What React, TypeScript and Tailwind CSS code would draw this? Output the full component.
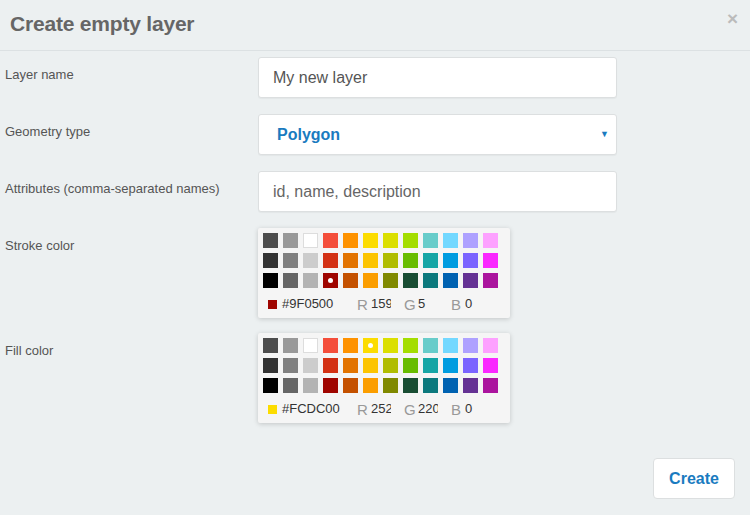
// Create empty layer dialog with two compact colour pickers

const SWATCHES = [
  '#4D4D4D', '#999999', '#FFFFFF', '#F44E3B', '#FE9200', '#FCDC00', '#DBDF00', '#A4DD00', '#68CCCA', '#73D8FF', '#AEA1FF', '#FDA1FF',
  '#333333', '#808080', '#CCCCCC', '#D33115', '#E27300', '#FCC400', '#B0BC00', '#68BC00', '#16A5A5', '#009CE0', '#7B64FF', '#FA28FF',
  '#000000', '#666666', '#B3B3B3', '#9F0500', '#C45100', '#FB9E00', '#808900', '#194D33', '#0C797D', '#0062B1', '#653294', '#AB149E',
];

interface PickerProps {
  hex: string;
  rgb: [number, number, number];
}

function CompactPicker({ hex, rgb }: PickerProps) {
  return (
    <div className="w-[252px] h-[90px] rounded-[2px] bg-[#f5f5f5] pt-[5px] pl-[5px] shadow-[0_1px_5px_rgba(0,0,0,0.18)]">
      <div className="flex flex-wrap w-[240px] gap-[5px]">
        {SWATCHES.map((c, i) => (
          <div
            key={i}
            className={`w-[15px] h-[15px] flex items-center justify-center ${c === '#FFFFFF' ? 'shadow-[inset_0_0_0_1px_#ddd]' : ''}`}
            style={{ backgroundColor: c }}
          >
            {c === hex && <div className="w-[5px] h-[5px] rounded-full bg-white" />}
          </div>
        ))}
      </div>
      {/* hex + rgb fields */}
      <div className="flex items-center h-[16px] mt-[8px] text-[13px] text-[#333]">
        <div className="w-[9px] h-[9px] ml-[5px]" style={{ backgroundColor: hex }} />
        <span className="ml-[5px] w-[75px]">{hex}</span>
        <div className="flex items-center w-[47px]">
          <span className="text-[#999] text-[15px] w-[14px] mt-[2px]">R</span>
          <span className="w-[20px] overflow-hidden whitespace-nowrap">{rgb[0]}</span>
        </div>
        <div className="flex items-center w-[47px]">
          <span className="text-[#999] text-[15px] w-[14px] mt-[2px]">G</span>
          <span className="w-[20px] overflow-hidden whitespace-nowrap">{rgb[1]}</span>
        </div>
        <div className="flex items-center w-[40px]">
          <span className="text-[#999] text-[15px] w-[14px] mt-[2px]">B</span>
          <span className="w-[20px] overflow-hidden whitespace-nowrap">{rgb[2]}</span>
        </div>
      </div>
    </div>
  );
}

function Row({ label, children }: { label: string; children: React.ReactNode }) {
  return (
    <div className="flex">
      <label className="w-[258px] shrink-0 pl-[5px] pt-[10px] text-[13px] leading-[16px] text-[#555]">{label}</label>
      {children}
    </div>
  );
}

const inputCls =
  'w-[359px] h-[41px] rounded-[3px] border border-[#dcdfe0] bg-white shadow-[0_1px_1px_rgba(0,0,0,0.04)] flex items-center';

export default function App() {
  return (
    <div className="w-[750px] h-[515px] bg-[#ecf0f1] font-['Liberation_Sans',Arial,sans-serif] flex flex-col">
      {/* Header */}
      <div className="h-[51px] flex items-center justify-between border-b border-[#dce1e3] pl-[10px] pr-[12px] shrink-0">
        <h1 className="text-[21px] font-bold text-[#666] mt-[-2px] tracking-[-0.2px]">Create empty layer</h1>
        <span className="text-[19px] font-bold text-[#bbb] leading-none mt-[-13px]">×</span>
      </div>

      {/* Form */}
      <div className="flex flex-col gap-[16px] pt-[6px]">
        <Row label="Layer name">
          <div className={inputCls}>
            <span className="pl-[14px] text-[16px] text-[#555]">My new layer</span>
          </div>
        </Row>
        <Row label="Geometry type">
          <div className={`${inputCls} justify-between`}>
            <span className="pl-[18px] text-[16px] font-bold text-[#1a7bbf]">Polygon</span>
            <span className="pr-[7px] text-[9px] text-[#1a7bbf]">▼</span>
          </div>
        </Row>
        <Row label="Attributes (comma-separated names)">
          <div className={inputCls}>
            <span className="pl-[14px] text-[16px] text-[#666]">id, name, description</span>
          </div>
        </Row>
        <Row label="Stroke color">
          <CompactPicker hex="#9F0500" rgb={[159, 5, 0]} />
        </Row>
        <div className="mt-[-1px]">
          <Row label="Fill color">
            <CompactPicker hex="#FCDC00" rgb={[252, 220, 0]} />
          </Row>
        </div>
      </div>

      {/* Footer */}
      <div className="flex justify-end pr-[15px] mt-[35px]">
        <button className="w-[82px] h-[41px] rounded-[4px] border border-[#dcdfe0] bg-white text-[16px] font-bold text-[#1a7bbf]">
          Create
        </button>
      </div>
    </div>
  );
}
